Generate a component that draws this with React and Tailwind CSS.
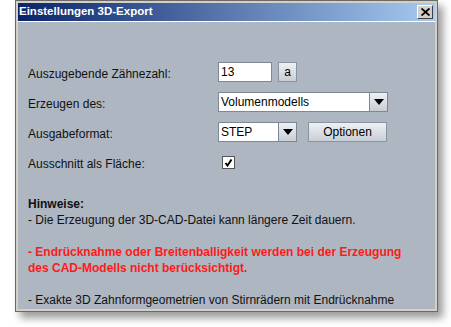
function ComboBox({ value, width }) {
  return (
    <div className={`flex h-[20px] ${width} border border-[#7d8894] bg-white`}>
      <div className="flex flex-1 items-center pl-[2px] text-[12px] text-black">{value}</div>
      <div className="flex w-[18px] items-center justify-center border-l border-[#7d8894] bg-gradient-to-b from-[#eef0f3] to-[#c9ced6]">
        <svg width="10" height="6" viewBox="0 0 10 6">
          <path d="M0 0 L10 0 L5 6 Z" fill="#000" />
        </svg>
      </div>
    </div>
  );
}

function Row({ label, children }) {
  return (
    <div className="flex h-[20px] items-center">
      <div className="mt-[4px] w-[190px] text-[12px] text-[#111]">{label}</div>
      {children}
    </div>
  );
}

export default function App() {
  return (
    <div className="h-[327px] w-[451px] bg-white pl-[15px]" style={{ fontFamily: '"Liberation Sans", Arial, sans-serif' }}>
      <div className="flex h-[312px] w-[423px] flex-col border border-[#6a6a6a] bg-[#d4d0c8] p-[2px] shadow-[5px_6px_8px_rgba(0,0,0,0.4)]">
        <div className="flex h-[18px] items-center justify-between bg-gradient-to-r from-[#0a246a] via-[#5b78ae] to-[#a6caf0] pl-[1px] pr-[2px]">
          <span className="text-[11.5px] font-bold text-white">Einstellungen 3D-Export</span>
          <div className="flex h-[14px] w-[16px] items-center justify-center border border-t-white border-l-white border-r-[#404040] border-b-[#404040] bg-[#d4d0c8]">
            <svg width="9" height="8" viewBox="0 0 9 8">
              <path d="M0.5 0.5 L8.5 7.5 M8.5 0.5 L0.5 7.5" stroke="#000" strokeWidth="1.8" />
            </svg>
          </div>
        </div>
        <div className="flex flex-1 flex-col overflow-hidden border-t border-[#ffffff] bg-[#adb6c1] pl-[10px] pt-[40px]">
          <div className="flex flex-col gap-[10px]">
            <Row label="Auszugebende Zähnezahl:">
              <div className="flex h-[20px] w-[54px] items-center border border-[#7d8894] bg-white pl-[2px] text-[12px]">13</div>
              <div className="ml-[6px] flex h-[20px] w-[19px] items-center justify-center border border-[#8994a1] bg-gradient-to-b from-[#eef0f3] to-[#c9ced6] text-[12px]">a</div>
            </Row>
            <Row label="Erzeugen des:">
              <ComboBox value="Volumenmodells" width="w-[170px]" />
            </Row>
            <Row label="Ausgabeformat:">
              <ComboBox value="STEP" width="w-[79px]" />
              <div className="ml-[11px] flex h-[20px] w-[79px] items-center justify-center border border-[#8994a1] bg-gradient-to-b from-[#eef0f3] to-[#c9ced6] text-[12px]">Optionen</div>
            </Row>
            <Row label="Ausschnitt als Fläche:">
              <div className="ml-[4px] flex h-[13px] w-[13px] items-center justify-center border border-[#555] bg-white">
                <svg width="9" height="9" viewBox="0 0 9 9">
                  <path d="M1.5 5 L3.5 7.5 L7.5 1.5" stroke="#000" strokeWidth="2" fill="none" />
                </svg>
              </div>
            </Row>
          </div>
          <div className="mt-[24px] text-[12px] leading-[16px] text-[#111]">
            <div className="font-bold">Hinweise:</div>
            <div>- Die Erzeugung der 3D-CAD-Datei kann längere Zeit dauern.</div>
            <div className="h-[16px]" />
            <div className="font-bold text-[#ff1a1a]">
              - Endrücknahme oder Breitenballigkeit werden bei der Erzeugung
              <br />
              des CAD-Modells nicht berücksichtigt.
            </div>
            <div className="h-[16px]" />
            <div>- Exakte 3D Zahnformgeometrien von Stirnrädern mit Endrücknahme</div>
          </div>
        </div>
      </div>
    </div>
  );
}
